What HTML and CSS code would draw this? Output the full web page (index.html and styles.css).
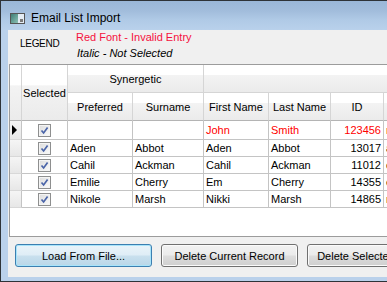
FILE: index.html
```html
<!DOCTYPE html>
<html lang="en">

<head>
    <title>Email List Import</title>
    <link rel="stylesheet" href="styles.css">
</head>

<body>
    <div class="window">
        <div class="titlebar">
            <svg class="appicon" width="15" height="11" viewBox="0 0 15 11">
                <defs>
                    <linearGradient id="teal" x1="0" y1="0" x2="1" y2="1">
                        <stop offset="0" stop-color="#3f7d76" />
                        <stop offset="1" stop-color="#8cc1b5" />
                    </linearGradient>
                </defs>
                <rect x="0.5" y="0.5" width="14" height="10" fill="#e4ecf4" stroke="#555" />
                <rect x="1" y="1" width="7" height="9" fill="url(#teal)" />
                <rect x="10" y="6" width="3" height="3" fill="#7a7a7a" />
            </svg>
            <span class="title">Email List Import</span>
        </div>
        <div class="frame">
            <div class="client">
                <div class="legend">
                    <div class="legend-label">LEGEND</div>
                    <div class="legend-items">
                        <div class="invalid">Red Font - Invalid Entry</div>
                        <div class="unselected">Italic - Not Selected</div>
                    </div>
                </div>

                <div class="grid-wrap">
                    <div class="grid">
                        <div class="hd corner"></div>
                        <div class="hd selected-hd">Selected</div>
                        <div class="hd group-hd">Synergetic</div>
                        <div class="hd blank-hd"></div>
                        <div class="hd">Preferred</div>
                        <div class="hd">Surname</div>
                        <div class="hd">First Name</div>
                        <div class="hd">Last Name</div>
                        <div class="hd">ID</div>
                        <div class="hd"></div>

                        <div class="rh first"><span class="pointer"></span></div>
                        <div class="cell check first"><span class="box"></span></div>
                        <div class="cell first"></div>
                        <div class="cell first"></div>
                        <div class="cell first bad">John</div>
                        <div class="cell first bad">Smith</div>
                        <div class="cell first num bad">123456</div>
                        <div class="cell first bad">rsmith</div>

                        <div class="rh"></div>
                        <div class="cell check"><span class="box"></span></div>
                        <div class="cell">Aden</div>
                        <div class="cell">Abbot</div>
                        <div class="cell">Aden</div>
                        <div class="cell">Abbot</div>
                        <div class="cell num">13017</div>
                        <div class="cell">aabbot</div>

                        <div class="rh"></div>
                        <div class="cell check"><span class="box"></span></div>
                        <div class="cell">Cahil</div>
                        <div class="cell">Ackman</div>
                        <div class="cell">Cahil</div>
                        <div class="cell">Ackman</div>
                        <div class="cell num">11012</div>
                        <div class="cell">cackman</div>

                        <div class="rh"></div>
                        <div class="cell check"><span class="box"></span></div>
                        <div class="cell">Emilie</div>
                        <div class="cell">Cherry</div>
                        <div class="cell">Em</div>
                        <div class="cell">Cherry</div>
                        <div class="cell num">14355</div>
                        <div class="cell">echerry</div>

                        <div class="rh"></div>
                        <div class="cell check"><span class="box"></span></div>
                        <div class="cell">Nikole</div>
                        <div class="cell">Marsh</div>
                        <div class="cell">Nikki</div>
                        <div class="cell">Marsh</div>
                        <div class="cell num">14865</div>
                        <div class="cell">nmarsh</div>
                    </div>
                </div>

                <div class="buttons">
                    <button class="btn default">Load From File...</button>
                    <button class="btn">Delete Current Record</button>
                    <button class="btn narrow">Delete Selected</button>
                </div>
            </div>
        </div>
    </div>
</body>

</html>
```

FILE: styles.css
```css
body {
    margin: 0;
    width: 387px;
    height: 282px;
    overflow: hidden;
    background-color: #f0f0f0;
    font-family: "Liberation Sans", Arial, sans-serif;
    font-size: 11px;
    color: #000;
}

div.window {
    width: 520px;
    border-top: 1px solid #2e3338;
    border-left: 1px solid #2e3338;
    border-bottom: 1px solid #2e3338;
    background-color: #bad1eb;
}

div.titlebar {
    display: flex;
    align-items: center;
    box-sizing: border-box;
    height: 29px;
    padding: 5px 0 0 9px;
    gap: 6px;
    background: linear-gradient(#9ab7d8 0%, #a2bddc 35%, #b0cae6 65%, #b9d1eb 100%);
}

.appicon {
    display: block;
}

.title {
    font-size: 12px;
    line-height: 24px;
}

div.frame {
    padding: 0 0 4px 7px;
}

div.client {
    display: flex;
    flex-direction: column;
    height: 247px;
    background-color: #f0f0f0;
}

div.legend {
    display: flex;
    height: 34px;
    box-sizing: border-box;
}

div.legend-label {
    width: 68px;
    box-sizing: border-box;
    padding-left: 12px;
    margin-top: 6px;
    line-height: 15px;
    font-size: 10px;
    letter-spacing: -0.3px;
}

div.legend-items {
    line-height: 15px;
}

div.invalid {
    color: #f5103e;
}

div.unselected {
    font-style: italic;
    padding-left: 1px;
    line-height: 16px;
}

div.grid-wrap {
    height: 173px;
    box-sizing: border-box;
    margin-left: 1px;
    border: 1px solid #9c9c9c;
    border-right: none;
    background-color: #fff;
    overflow: hidden;
}

div.grid {
    display: grid;
    grid-template-columns: 12px 46px 65px 71px 65px 62px 53px 100px;
    grid-template-rows: 28px 28px 19px 17px 17px 17px 17px;
}

.grid > div {
    box-sizing: border-box;
    border-right: 1px solid #c4c4c4;
    border-bottom: 1px solid #c4c4c4;
    white-space: nowrap;
    overflow: hidden;
}

div.hd {
    display: flex;
    align-items: center;
    justify-content: center;
    background: linear-gradient(#ffffff 0%, #ffffff 36%, #f3f3f3 38%, #ebebeb 100%);
    border-right-color: #d5d5d5;
    border-bottom-color: #d5d5d5;
}

div.corner,
div.selected-hd {
    grid-row: 1 / span 2;
    border-bottom-color: #b4b4b4;
}

div.group-hd {
    grid-column: 3 / span 2;
}

div.blank-hd {
    grid-column: 5 / span 4;
}

div.hd:nth-child(n+5) {
    border-bottom-color: #b4b4b4;
}

div.rh {
    display: flex;
    align-items: center;
    padding-left: 2px;
    background: linear-gradient(#f5f5f5, #e7e7e7);
    border-bottom-color: #d8d8d8;
}

span.pointer {
    width: 0;
    height: 0;
    border-left: 5px solid #000;
    border-top: 5px solid transparent;
    border-bottom: 5px solid transparent;
}

div.cell {
    display: flex;
    align-items: center;
    padding: 0 2px;
}

div.num {
    justify-content: flex-end;
}

div.bad {
    color: #ff0000;
}

div.check {
    justify-content: center;
}

span.box {
    width: 13px;
    height: 13px;
    box-sizing: border-box;
    border: 1px solid #8e8f8f;
    background:
        url("data:image/svg+xml,%3Csvg xmlns='http://www.w3.org/2000/svg' width='11' height='11'%3E%3Cpath d='M2.5 5.5 L4.6 8 L8.6 2.6' fill='none' stroke='%234a64a8' stroke-width='1.7'/%3E%3C/svg%3E") center / 11px 11px no-repeat,
        linear-gradient(135deg, #dcdcdc, #fbfbfb);
    box-shadow: inset 0 0 0 1px #f4f4f4;
}

div.buttons {
    display: flex;
    gap: 9px;
    padding: 7px 0 0 7px;
}

button.btn {
    flex: 0 0 137px;
    height: 23px;
    margin: 0;
    padding: 0;
    border: 1px solid #707070;
    border-radius: 3px;
    font-family: "Liberation Sans", Arial, sans-serif;
    font-size: 11px;
    color: #000;
    background: linear-gradient(#f2f2f2 0%, #ebebeb 48%, #dddddd 52%, #cfcfcf 100%);
    box-shadow: inset 0 0 0 1px #fbfbfb;
}

button.narrow {
    flex-basis: 98px;
}

button.default {
    border-color: #3c7fb1;
    background: linear-gradient(#eaf4fa 0%, #dfedf6 48%, #c9e0ee 52%, #b9d6e8 100%);
    box-shadow: inset 0 0 0 1px #a8e4fa;
}
```
